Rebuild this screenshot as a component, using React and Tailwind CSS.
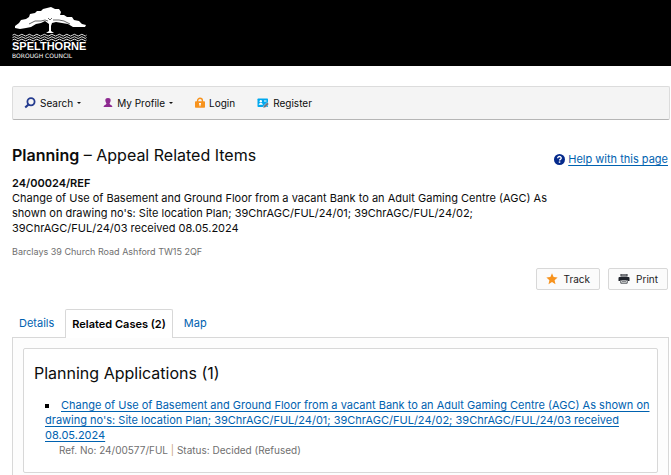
const wave = "M0 1.2 Q1.9 -0.6 3.8 1.2 T7.5 1.2 T11.2 1.2 T15 1.2 T18.8 1.2 T22.5 1.2 T26.2 1.2 T30 1.2 T33.8 1.2 T37.5 1.2 T41.2 1.2 T45 1.2 T48.8 1.2 T52.5 1.2 T56.2 1.2 T60 1.2 T63.8 1.2 T67.5 1.2 T71.2 1.2 T74 1.2";

function Logo() {
  return (
    <svg width="76" height="52" viewBox="0 0 76 52" role="img" aria-label="Spelthorne Borough Council" className="block">
      <path
        fill="#fff"
        d="M3 19 L7 16 L9 13 L14 12 L17 10 L18 7 L23 6 L25 4 L29 4 L31 2 L35 1 L39 0 L43 2 L47 2 L49 5 L48 8 L52 8 L55 10 L60 10 L62 13 L67 14 L70 17 L74 18 L73 20 L67 20 L61 20 L56 17 L50 16 L44 15 L40 16 L39 19 L39 24 L42 26 L34 26 L37 24 L37 17 L33 14 L29 16 L24 17 L19 20 L14 21 L8 22 L3 21 Z"
      />
      <path fill="none" stroke="#000" strokeWidth="0.6" d="M17 17 L23 14 L29 14 L33 13 L36 14 M41 13 L47 13 L52 14 L58 17 M36 11 L38 13 L40 11" />
      <g fill="none" stroke="#fff" strokeWidth="0.9">
        <path d={wave} transform="translate(0.5 27)" />
        <path d={wave} transform="translate(0.5 29.4)" />
        <path d={wave} transform="translate(0.5 31.8)" />
      </g>
      <text x="0" y="43" fill="#fff" fontFamily="Liberation Sans, Arial, sans-serif" fontWeight="700" fontSize="11">
        SPELTHORNE
      </text>
      <text x="0" y="51" fill="#fff" fontFamily="DejaVu Sans, sans-serif" fontSize="6">
        BOROUGH COUNCIL
      </text>
    </svg>
  );
}

function SearchIcon() {
  return (
    <svg width="12" height="12" viewBox="0 0 12 12" aria-hidden="true">
      <circle cx="7" cy="4.8" r="3.6" fill="none" stroke="#243b8f" strokeWidth="1.8" />
      <path d="M4.4 7.6 L1.2 10.5" stroke="#243b8f" strokeWidth="2.1" />
    </svg>
  );
}

function UserIcon() {
  return (
    <svg width="10" height="12" viewBox="0 0 10 12" aria-hidden="true">
      <path fill="#8d2a90" d="M5 1 C7.2 1 7.9 2.3 7.6 4.1 C7.4 5.3 6.7 5.9 6.6 6.7 C6.6 7.7 9.2 7.7 9.4 10 H0.6 C0.8 7.7 3.4 7.7 3.4 6.7 C3.3 5.9 2.6 5.3 2.4 4.1 C2.1 2.3 2.8 1 5 1 Z" />
    </svg>
  );
}

function LockIcon() {
  return (
    <svg width="10" height="12" viewBox="0 0 10 12" aria-hidden="true">
      <path d="M2.6 5 V3.6 A2.4 2.4 0 0 1 7.4 3.6 V5" fill="none" stroke="#f7931e" strokeWidth="1.4" />
      <rect x="0" y="4.3" width="10" height="6.4" rx="0.8" fill="#f7931e" />
      <path d="M4 6 H6 V7.5 H5.5 V9.2 H4.5 V7.5 H4 Z" fill="#fff" />
    </svg>
  );
}

function RegisterIcon() {
  return (
    <svg width="12" height="12" viewBox="0 0 12 12" aria-hidden="true">
      <rect x="0.5" y="1.5" width="10.5" height="8.5" rx="0.7" fill="#00a8ee" />
      <circle cx="3.8" cy="4.2" r="1.2" fill="#fff" />
      <path d="M1.7 7.8 C1.8 5.4 5.8 5.4 5.9 7.8 Z M7 3.6 H9.5 V4.4 H7 Z" fill="#fff" />
      <path d="M6 11 L6.5 8.9 L10.2 5.4 L11.9 7 L8.2 10.5 Z" fill="#6b7280" stroke="#f4f4f4" strokeWidth="0.4" />
    </svg>
  );
}

function HelpIcon() {
  return (
    <svg width="11" height="11" viewBox="0 0 11 11" aria-hidden="true">
      <circle cx="5.5" cy="5.5" r="5.5" fill="#052a8c" />
      <path d="M3.7 4.2 C3.7 1.9 7.3 2 7.2 4.2 C7.1 5.4 5.6 5.3 5.6 6.6" fill="none" stroke="#fff" strokeWidth="1.4" />
      <rect x="4.8" y="7.4" width="1.5" height="1.4" fill="#fff" />
    </svg>
  );
}

function StarIcon() {
  return (
    <svg width="12" height="12" viewBox="0 0 12 12" aria-hidden="true">
      <path fill="#f7931e" d="M6 0.3 L7.6 4.1 L11.6 4.5 L8.6 7.2 L9.5 11.2 L6 9 L2.5 11.2 L3.4 7.2 L0.4 4.5 L4.4 4.1 Z" />
    </svg>
  );
}

function PrintIcon() {
  return (
    <svg width="12" height="12" viewBox="0 0 12 12" aria-hidden="true">
      <path fill="#20242c" d="M2.5 1 H9.5 V3.4 H2.5 Z M1.4 4 H10.6 Q11.5 4 11.5 5 V8 H9.8 V7 H2.2 V8 H0.5 V5 Q0.5 4 1.4 4 Z" />
      <path fill="#fff" stroke="#20242c" strokeWidth="0.8" d="M2.8 7 H9.2 V10.2 H2.8 Z" />
      <path d="M3.3 2 H8.7" stroke="#fff" strokeWidth="0.8" />
      <path d="M4 8.6 H8" stroke="#20242c" strokeWidth="0.6" />
    </svg>
  );
}

function Caret() {
  return (
    <svg width="4" height="2" viewBox="0 0 4 2" aria-hidden="true">
      <path d="M0 0 H4 L2 2 Z" fill="#111" />
    </svg>
  );
}

export default function App() {
  return (
    <div className="bg-white font-['Inter',sans-serif] text-[11px] leading-[15px] text-[#0b0c0c]">
      <header className="bg-black px-3 py-[7px]">
        <Logo />
      </header>

      <nav className="mt-5 mr-px ml-3 flex h-[34px] items-center gap-[22px] rounded-xs border border-[#dcdcdc] border-b-[#b5b5b5] bg-[#f4f4f4] pl-[11px] text-[10px]">
        <button type="button" className="flex items-center gap-1">
          <SearchIcon />
          <span>Search</span>
          <Caret />
        </button>
        <button type="button" className="flex items-center gap-1">
          <UserIcon />
          <span>My Profile</span>
          <Caret />
        </button>
        <a href="#login" className="flex items-center gap-1">
          <LockIcon />
          <span>Login</span>
        </a>
        <a href="#register" className="flex items-center gap-1">
          <RegisterIcon />
          <span>Register</span>
        </a>
      </nav>

      <main className="pr-[3px] pl-3">
        <div className="mt-6 flex items-start justify-between">
          <h1 className="text-base leading-[22px]">
            <strong className="font-semibold">Planning</strong> – Appeal Related Items
          </h1>
          <a href="#help" className="mt-2 flex items-center gap-[3px] text-[#0062b0]">
            <HelpIcon />
            <span className="underline underline-offset-2">Help with this page</span>
          </a>
        </div>

        <div className="mt-[9px] max-w-[540px]">
          <div className="font-semibold">24/00024/REF</div>
          <p>
            Change of Use of Basement and Ground Floor from a vacant Bank to an Adult Gaming Centre (AGC) As shown on
            drawing no's: Site location Plan; 39ChrAGC/FUL/24/01; 39ChrAGC/FUL/24/02; 39ChrAGC/FUL/24/03 received
            08.05.2024
          </p>
          <p className="mt-2 text-[9px] text-[#6f6f6f]">Barclays 39 Church Road Ashford TW15 2QF</p>
        </div>

        <div className="mt-[9px] flex justify-end gap-2 text-[10px] text-[#222]">
          <button type="button" className="flex h-[22px] items-center gap-[6px] rounded-xs border border-[#d8d8d8] bg-[#fbfbfb] px-[9px]">
            <StarIcon />
            Track
          </button>
          <button type="button" className="flex h-[22px] items-center gap-[6px] rounded-xs border border-[#d8d8d8] bg-[#fbfbfb] px-[9px]">
            <PrintIcon />
            Print
          </button>
        </div>
      </main>

      <section className="mt-[19px] mr-[2px] ml-3">
        <div className="flex items-end">
          <a href="#details" className="mr-[11px] ml-[7px] flex h-7 items-center text-[#0062b0]">Details</a>
          <a href="#related" aria-current="page" className="relative -mb-px flex h-[29px] items-center rounded-t-xs border border-b-0 border-[#d8d8d8] bg-white px-[6px] font-semibold text-black">
            Related Cases (2)
          </a>
          <a href="#map" className="ml-[11px] flex h-7 items-center text-[#0062b0]">Map</a>
        </div>

        <div className="border border-b-0 border-[#d8d8d8] bg-[#fdfdfd] px-[10px] pt-[10px] pb-1">
          <div className="rounded-xs border border-[#d8d8d8] bg-white pt-[13px] pb-[14px] pl-[10px]">
            <h2 className="text-base leading-[22px]">Planning Applications (1)</h2>
            <ul className="mt-[14px] list-inside list-[square] pl-[11px]">
              <li className="marker:text-black">
                <a href="#application" className="text-[#0062b0] underline underline-offset-2">
                  Change of Use of Basement and Ground Floor from a vacant Bank to an Adult Gaming Centre (AGC) As shown
                  on drawing no's: Site location Plan; 39ChrAGC/FUL/24/01; 39ChrAGC/FUL/24/02; 39ChrAGC/FUL/24/03
                  received 08.05.2024
                </a>
                <p className="ml-[14px] text-[10px] text-[#6f6f6f]">
                  Ref. No: 24/00577/FUL <span className="text-[#c9a27c]">|</span> Status: Decided (Refused)
                </p>
              </li>
            </ul>
          </div>
        </div>
      </section>
    </div>
  );
}
